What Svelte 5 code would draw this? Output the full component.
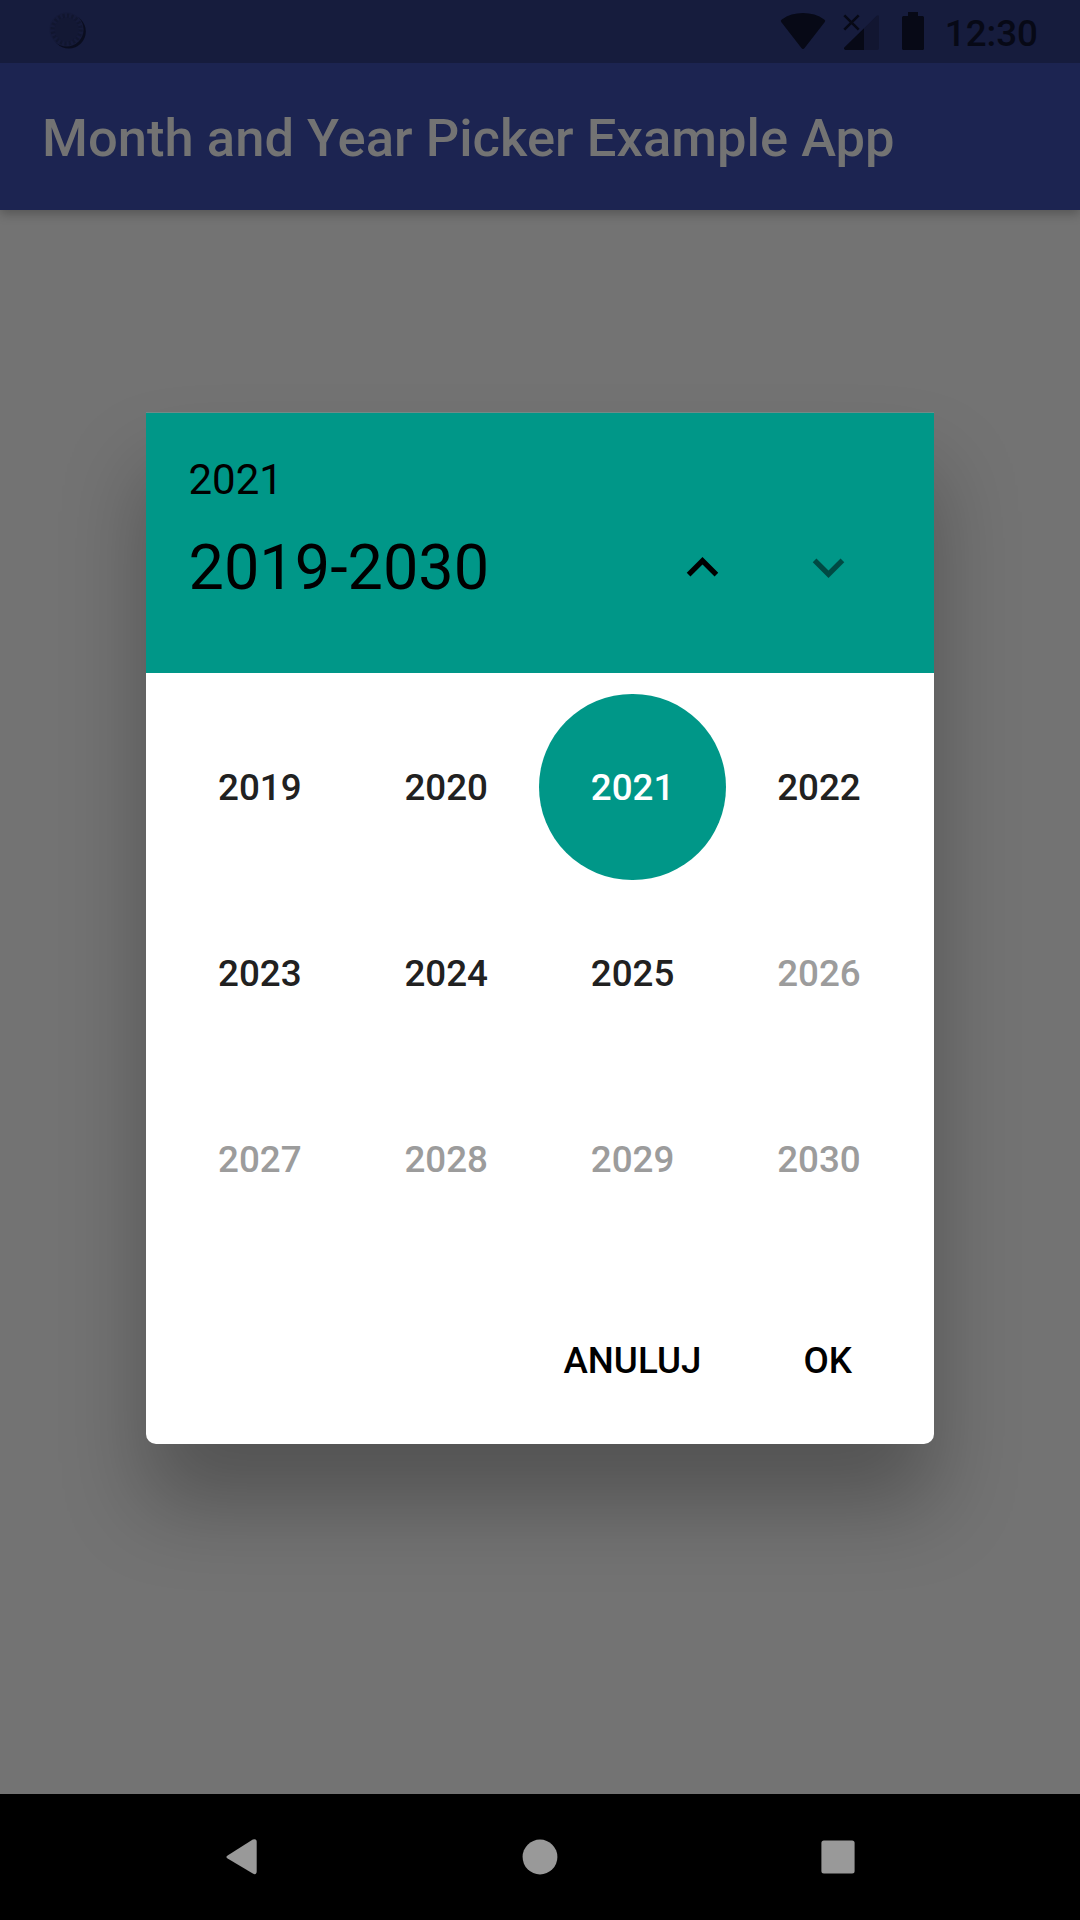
<script>
  const firstYear = 2019;
  const maxYear = 2025;
  let selected = $state(2021);
  const years = Array.from({ length: 12 }, (_, i) => firstYear + i);
</script>

<div class="screen">
  <div class="status">
    <svg class="camera" viewBox="0 0 44 44">
      <circle cx="20.8" cy="20.6" r="17" fill="#0a0d1f" />
      <circle cx="18.6" cy="18.6" r="17" fill="#151a39" />
      <circle cx="18.6" cy="18.6" r="14" fill="none" stroke="#11162f" stroke-width="4" stroke-dasharray="2 2.4" />
      <circle cx="18.6" cy="18.6" r="12" fill="#131834" />
    </svg>
    <svg class="signals" viewBox="0 0 150 63">
      <path d="M1.4 22.2 Q0 20.6 1.8 19.4 Q11 13 23 13 Q35 13 44.2 19.4 Q46 20.6 44.6 22.2 L24.6 48 Q23 50 21.4 48 Z" />
      <path class="faint" d="M84 28.3 L96.4 15.9 Q99 14 99 17 V48 Q99 50 97 50 H84 Z" />
      <path d="M84 28.3 V50 H65.5 Q63 49 64.5 47.3 Z" />
      <path class="cross" d="M64.3 15.3 L78.7 29.7 M78.7 15.3 L64.3 29.7" />
      <path d="M128 12 H138 V16 H142.5 Q144 16 144 17.5 V48.5 Q144 50 142.5 50 H123.5 Q122 50 122 48.5 V17.5 Q122 16 123.5 16 H128 Z" />
    </svg>
    <span class="clock">12:30</span>
  </div>

  <header class="toolbar">Month and Year Picker Example App</header>

  <main class="content">
    <section class="dialog">
      <div class="head">
        <div class="current">{selected}</div>
        <div class="range-row">
          <div class="range">{firstYear}-{firstYear + 11}</div>
          <button class="arrow" aria-label="Previous years">
            <svg viewBox="0 0 24 24"><path d="M12 8l-6 6 1.410 1.410L12 10.830l4.590 4.580L18 14z" /></svg>
          </button>
          <button class="arrow off" aria-label="Next years" disabled>
            <svg viewBox="0 0 24 24"><path d="M16.590 8.590L12 13.170 7.410 8.590 6 10l6 6 6-6z" /></svg>
          </button>
        </div>
      </div>
      <div class="grid">
        {#each years as year}
          <button
            class="year"
            class:selected={year === selected}
            disabled={year > maxYear}
            onclick={() => (selected = year)}>{year}</button>
        {/each}
      </div>
      <div class="actions">
        <button class="action">ANULUJ</button>
        <button class="action">OK</button>
      </div>
    </section>
  </main>

  <nav class="navbar">
    <svg viewBox="0 0 32 36"><path d="M1.6 16.400 L26.800 .6 Q30.700 -1 30.700 3 V32 Q30.700 36.500 26.800 34.600 L1.600 19.600 Q-.8 18 1.600 16.400Z" /></svg>
    <svg viewBox="0 0 36 36"><circle cx="18" cy="18" r="17.400" /></svg>
    <svg viewBox="0 0 34 34"><rect x=".4" y=".4" width="33.200" height="33.200" rx="2.500" /></svg>
  </nav>
</div>

<style>
  :global(body) {
    margin: 0;
  }
  .screen {
    width: 1080px;
    height: 1920px;
    display: flex;
    flex-direction: column;
    overflow: hidden;
    background: #737373;
    font-family: Roboto, sans-serif;
  }
  button {
    border: 0;
    margin: 0;
    padding: 0;
    background: none;
    color: inherit;
    font: inherit;
  }
  .status {
    height: 63px;
    flex: none;
    box-sizing: border-box;
    padding: 0 42px 0 48px;
    display: flex;
    align-items: center;
    background: #161c3d;
    z-index: 2;
  }
  .camera {
    width: 44px;
    height: 44px;
    margin-top: 3px;
  }
  .signals {
    width: 150px;
    height: 63px;
    margin-left: auto;
    fill: #070916;
  }
  .signals .faint {
    fill: #121631;
  }
  .signals .cross {
    fill: none;
    stroke: #070916;
    stroke-width: 2.6;
  }
  .clock {
    width: 94px;
    margin-left: 14px;
    padding-top: 4px;
    text-align: right;
    font-size: 36.75px;
    font-weight: 500;
    color: #070916;
  }
  .toolbar {
    height: 147px;
    flex: none;
    box-sizing: border-box;
    padding: 3px 42px 0;
    display: flex;
    align-items: center;
    background: #1c2451;
    color: #737373;
    font-size: 52.5px;
    font-weight: 500;
    letter-spacing: 0.03px;
    box-shadow: 0 4px 10px rgba(0, 0, 0, 0.25);
    z-index: 1;
  }
  .content {
    flex: 1;
    display: flex;
    justify-content: center;
    align-items: flex-start;
    padding-top: 202px;
  }
  .dialog {
    width: 788px;
    height: 1032px;
    display: flex;
    flex-direction: column;
    background: #fff;
    border-radius: 3px 3px 10px 10px;
    box-shadow: 0 60px 84px rgba(0, 0, 0, 0.28);
  }
  .head {
    height: 260.5px;
    flex: none;
    box-sizing: border-box;
    padding: 42px 42.5px 0;
    background: #009788;
    border-top: 1px solid #6f8b88;
    color: #000;
  }
  .current {
    font-size: 42px;
    line-height: 50px;
  }
  .range-row {
    display: flex;
    align-items: center;
    height: 124px;
  }
  .range {
    flex: 1;
    font-size: 63px;
  }
  .arrow {
    width: 126px;
    height: 124px;
    display: flex;
    align-items: center;
    justify-content: center;
  }
  .arrow svg {
    width: 63px;
    height: 63px;
  }
  .arrow.off {
    opacity: 0.5;
  }
  .grid {
    display: grid;
    grid-template-columns: repeat(4, 186.4px);
    grid-auto-rows: 186.4px;
    padding: 21px 0 0 20.6px;
  }
  .year {
    border-radius: 50%;
    padding-top: 1px;
    font-size: 36.75px;
    font-weight: 500;
    color: #212121;
  }
  .year:disabled {
    color: #9c9c9c;
  }
  .year.selected {
    background: #009788;
    color: #fff;
  }
  .actions {
    display: flex;
    justify-content: flex-end;
    gap: 18px;
    margin-top: 44.5px;
    padding-right: 40px;
  }
  .action {
    min-width: 126px;
    height: 126px;
    padding: 1px 42px 0;
    font-size: 36.75px;
    font-weight: 500;
    color: #000;
  }
  .navbar {
    height: 126px;
    flex: none;
    display: flex;
    align-items: center;
    background: #000;
    fill: #999;
  }
  .navbar svg:nth-child(1) {
    width: 32px;
    height: 36px;
    margin-left: 226px;
  }
  .navbar svg:nth-child(2) {
    width: 36px;
    height: 36px;
    margin-left: 263.5px;
  }
  .navbar svg:nth-child(3) {
    width: 34px;
    height: 34px;
    margin-left: 263.5px;
  }
</style>
